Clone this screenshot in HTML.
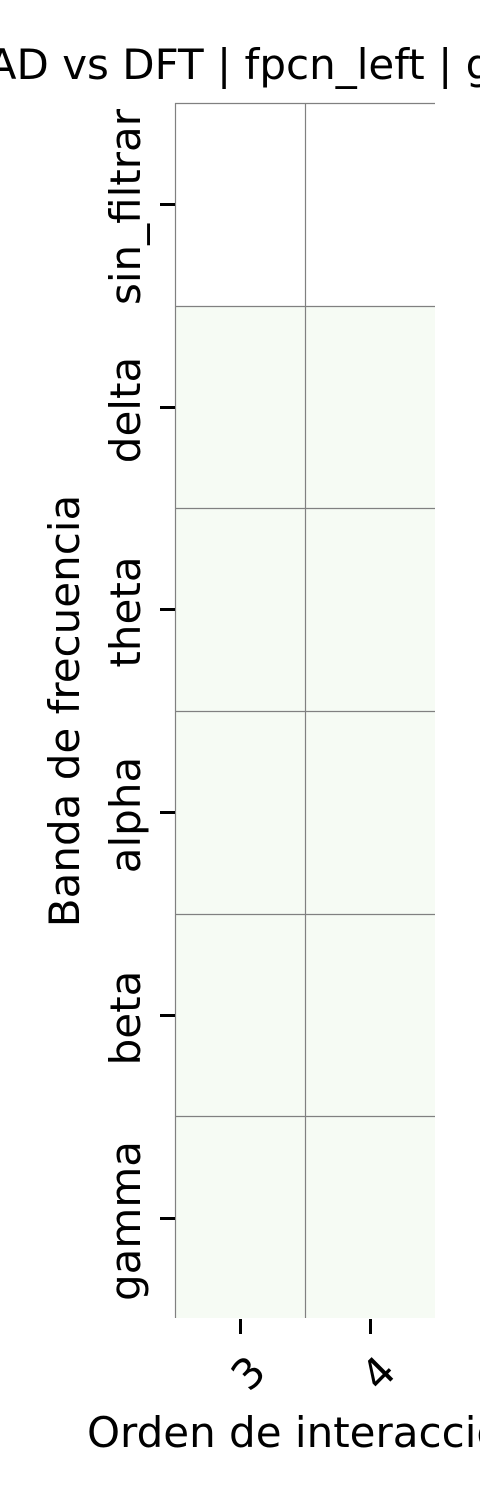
<!DOCTYPE html>
<html><head><meta charset="utf-8"><style>html,body{margin:0;padding:0;background:#fff;width:480px;height:1500px;overflow:hidden}</style></head>
<body>
<svg width="480" height="1500" xmlns="http://www.w3.org/2000/svg" font-family="DejaVu Sans, sans-serif" fill="#000">
<text x="240" y="79" font-size="42" text-anchor="middle">AD vs DFT | fpcn_left | g</text>
<rect x="175" y="306" width="260" height="1012" fill="#f6fbf4"/>
<g stroke="#808080" stroke-width="1.2" fill="none">
<line x1="175.5" y1="103" x2="175.5" y2="1318"/>
<line x1="305.5" y1="103" x2="305.5" y2="1318"/>
<line x1="175" y1="103.5" x2="435" y2="103.5"/>
<line x1="175" y1="306.5" x2="435" y2="306.5"/>
<line x1="175" y1="508.5" x2="435" y2="508.5"/>
<line x1="175" y1="711.5" x2="435" y2="711.5"/>
<line x1="175" y1="914.5" x2="435" y2="914.5"/>
<line x1="175" y1="1116.5" x2="435" y2="1116.5"/>
</g>
<g stroke="#000" stroke-width="3">
<line x1="160" y1="204.5" x2="175" y2="204.5"/>
<line x1="160" y1="407.5" x2="175" y2="407.5"/>
<line x1="160" y1="609.5" x2="175" y2="609.5"/>
<line x1="160" y1="812.5" x2="175" y2="812.5"/>
<line x1="160" y1="1015.5" x2="175" y2="1015.5"/>
<line x1="160" y1="1218.5" x2="175" y2="1218.5"/>
<line x1="240.5" y1="1319" x2="240.5" y2="1334"/>
<line x1="370.5" y1="1319" x2="370.5" y2="1334"/>
</g>
<g font-size="42" text-anchor="middle">
<text transform="translate(140,207) rotate(-90)">sin_filtrar</text>
<text transform="translate(140,410) rotate(-90)">delta</text>
<text transform="translate(140,612) rotate(-90)">theta</text>
<text transform="translate(140,815) rotate(-90)">alpha</text>
<text transform="translate(140,1018) rotate(-90)">beta</text>
<text transform="translate(140,1221) rotate(-90)">gamma</text>
<text transform="translate(79,711) rotate(-90)">Banda de frecuencia</text>
<text transform="translate(268,1374) rotate(-45)" text-anchor="end">3</text>
<text transform="translate(398,1374) rotate(-45)" text-anchor="end">4</text>
</g>
<text x="87" y="1447" font-size="42">Orden de interacción</text>
</svg>
</body></html>
